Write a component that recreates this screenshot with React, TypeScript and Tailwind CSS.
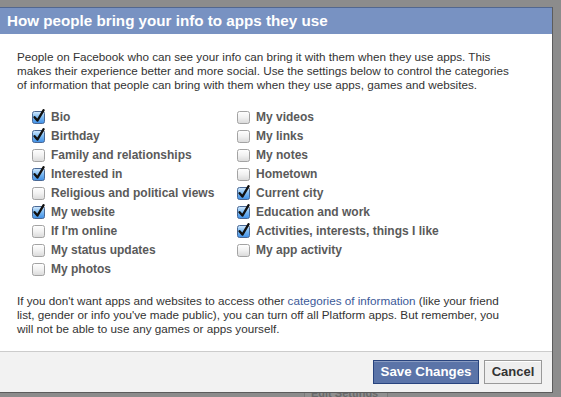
import React from "react";

type Item = [string, boolean];

const left: Item[] = [
  ["Bio", true],
  ["Birthday", true],
  ["Family and relationships", false],
  ["Interested in", true],
  ["Religious and political views", false],
  ["My website", true],
  ["If I'm online", false],
  ["My status updates", false],
  ["My photos", false],
];

const right: Item[] = [
  ["My videos", false],
  ["My links", false],
  ["My notes", false],
  ["Hometown", false],
  ["Current city", true],
  ["Education and work", true],
  ["Activities, interests, things I like", true],
  ["My app activity", false],
];

function Box({ checked, id }: { checked: boolean; id: string }) {
  return (
    <svg width="14" height="15" viewBox="0 0 14 15" className="shrink-0">
      <defs>
        <linearGradient id={`u${id}`} x1="0" y1="0" x2="0" y2="1">
          <stop offset="0" stopColor="#ffffff" />
          <stop offset="0.5" stopColor="#f1f1f1" />
          <stop offset="1" stopColor="#d9d9d9" />
        </linearGradient>
        <linearGradient id={`c${id}`} x1="0" y1="0" x2="0" y2="1">
          <stop offset="0" stopColor="#d6ebfd" />
          <stop offset="0.45" stopColor="#7fbcf3" />
          <stop offset="1" stopColor="#3f8fe6" />
        </linearGradient>
      </defs>
      <rect
        x="0.5"
        y="2.5"
        width="12"
        height="12"
        rx="2"
        fill={checked ? `url(#c${id})` : `url(#u${id})`}
        stroke={checked ? "#4a6894" : "#a3a3a3"}
      />
      {checked && (
        <path
          d="M2.6 8.2 L5.4 11.6 L11.6 1.2"
          fill="none"
          stroke="#111"
          strokeWidth="2.3"
          strokeLinecap="round"
          strokeLinejoin="round"
        />
      )}
    </svg>
  );
}

function Row({ label, checked, id }: { label: string; checked: boolean; id: string }) {
  return (
    <div className="flex h-[19px] items-center gap-[5px]">
      <Box checked={checked} id={id} />
      <span className="text-[12px] font-bold leading-[14px] text-[#5a5a5a]">{label}</span>
    </div>
  );
}

export default function App() {
  return (
    <div className="h-[397px] w-[561px] overflow-hidden bg-[#8c8c8c] pt-[7px] font-['Liberation_Sans',Arial,sans-serif]">
      <div className="w-[553px] border-r border-b border-[#5c5c5c] bg-white">
        <div className="flex h-[27px] items-center border-t border-[#52678f] bg-[#7892c2] pl-[7px]">
          <span className="text-[15.2px] font-bold leading-none text-white">
            How people bring your info to apps they use
          </span>
        </div>
        <div className="pl-[17px] pt-[16px] pb-[15px]">
          <p className="whitespace-nowrap text-[11.7px] leading-[14px] text-[#333]">
            People on Facebook who can see your info can bring it with them when they use apps. This
            <br />
            makes their experience better and more social. Use the settings below to control the categories
            <br />
            of information that people can bring with them when they use apps, games and websites.
          </p>
          <div className="mt-[15px] flex pl-[15px]">
            <div className="flex w-[205px] flex-col">
              {left.map(([l, c], i) => (
                <Row key={l} label={l} checked={c} id={`l${i}`} />
              ))}
            </div>
            <div className="flex flex-col">
              {right.map(([l, c], i) => (
                <Row key={l} label={l} checked={c} id={`r${i}`} />
              ))}
            </div>
          </div>
          <p className="mt-[16px] whitespace-nowrap text-[11.7px] leading-[14px] text-[#333]">
            If you don't want apps and websites to access other{" "}
            <span className="text-[#3b5998]">categories of information</span> (like your friend
            <br />
            list, gender or info you've made public), you can turn off all Platform apps. But remember, you
            <br />
            will not be able to use any games or apps yourself.
          </p>
        </div>
        <div className="flex h-[41px] items-center justify-end gap-[5px] border-t border-[#cccccc] bg-[#f2f2f2] pr-[10px]">
          <button className="h-[24px] w-[106px] border border-[#29447e] bg-[#5b74a8] text-[13.3px] font-bold text-white shadow-[inset_0_1px_0_#8a9cc2]">
            Save Changes
          </button>
          <button className="h-[24px] w-[58px] border border-[#999999] bg-[#eeeeee] text-[13px] font-bold text-[#333] shadow-[inset_0_1px_0_#ffffff]">
            Cancel
          </button>
        </div>
      </div>
      <div className="flex">
        <div className="ml-[304px] h-[6px] w-[84px] overflow-hidden border-x border-[#7a7a7a] bg-[#909090]">
          <div className="-mt-[8px] pl-[6px] text-[11px] font-bold text-[#6a6a6a]">Edit Settings</div>
        </div>
      </div>
    </div>
  );
}
